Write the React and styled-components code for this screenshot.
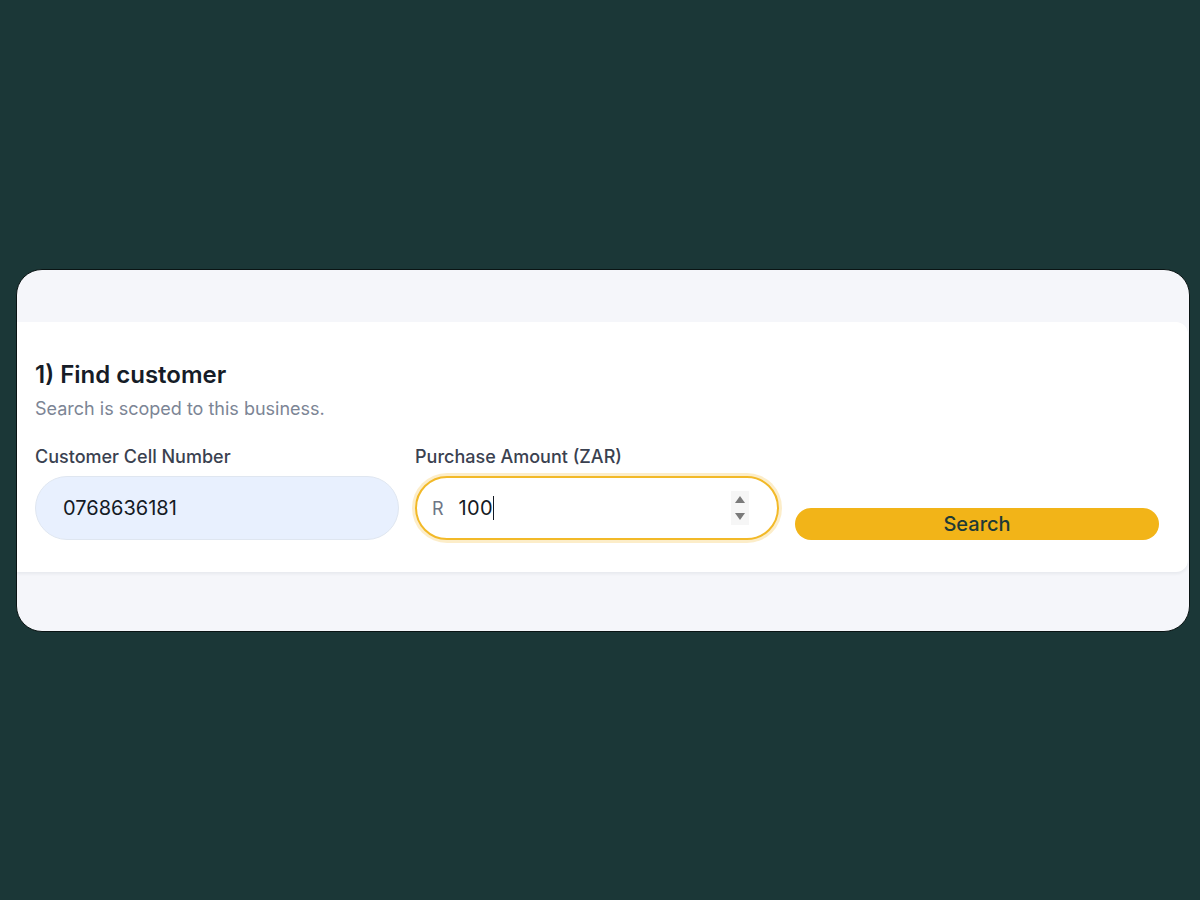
import React from 'react'
import styled, { createGlobalStyle } from 'styled-components'

const Global = createGlobalStyle`
  html, body {
    margin: 0;
    padding: 0;
    background: #1b3737;
  }
  body {
    font-family: Inter, "Noto Sans", "Liberation Sans", sans-serif;
  }
`

function App() {
  return (
    <Page>
      <Global />
      <Frame>
        <Card>
          <Title>1) Find customer</Title>
          <Sub>Search is scoped to this business.</Sub>
          <Grid>
            <Field>
              <Label>Customer Cell Number</Label>
              <CellInput>0768636181</CellInput>
            </Field>
            <Field>
              <Label>Purchase Amount (ZAR)</Label>
              <AmountInput>
                <Prefix>R</Prefix>
                <Value>100<Caret /></Value>
                <Spinner>
                  <svg width="12" height="26" viewBox="0 0 12 26">
                    <path d="M6 1 L11 8 L1 8 Z" fill="#7a7a7a" />
                    <path d="M1 18 L11 18 L6 25 Z" fill="#7a7a7a" />
                  </svg>
                </Spinner>
              </AmountInput>
            </Field>
            <Field>
              <SearchButton>Search</SearchButton>
            </Field>
          </Grid>
        </Card>
      </Frame>
    </Page>
  )
}

const Page = styled.div`
  width: 1200px;
  height: 900px;
  padding-top: 269px;
  padding-left: 16px;
  box-sizing: border-box;
`

const Frame = styled.div`
  width: 1174px;
  height: 363px;
  box-sizing: border-box;
  background: #f5f6fa;
  border: 1px solid #0a1414;
  border-radius: 26px;
  overflow: hidden;
  padding-top: 52px;
`

const Card = styled.div`
  width: 1171px;
  background: #ffffff;
  border-radius: 0 12px 12px 0;
  box-shadow: 0 2px 3px rgba(20, 30, 50, 0.06);
  padding: 37px 29px 32px 18px;
  box-sizing: border-box;
`

const Title = styled.h2`
  margin: 0;
  font-size: 24px;
  line-height: 32px;
  font-weight: 600;
  color: #161c27;
`

const Sub = styled.p`
  margin: 6px 0 0;
  font-size: 18px;
  line-height: 24px;
  color: #7c8595;
`

const Grid = styled.div`
  display: grid;
  grid-template-columns: repeat(3, 364px);
  column-gap: 16px;
  align-items: end;
  margin-top: 24px;
`

const Field = styled.div`
  display: flex;
  flex-direction: column;
`

const Label = styled.label`
  font-size: 18px;
  line-height: 24px;
  font-weight: 500;
  color: #3a4150;
  margin-bottom: 7px;
`

const CellInput = styled.div`
  height: 64px;
  box-sizing: border-box;
  border-radius: 32px;
  background: #e8f0fe;
  border: 1px solid #dfe6f0;
  padding: 0 27px;
  display: flex;
  align-items: center;
  font-size: 20px;
  color: #141a24;
`

const AmountInput = styled.div`
  height: 64px;
  box-sizing: border-box;
  border-radius: 32px;
  background: #ffffff;
  border: 2px solid #f2b928;
  box-shadow: 0 0 0 3px rgba(242, 185, 40, 0.25);
  padding: 0 28px 0 15px;
  display: flex;
  align-items: center;
  font-size: 20px;
  color: #141a24;
`

const Prefix = styled.span`
  font-size: 18px;
  color: #6e7686;
  margin-right: 15px;
`

const Value = styled.span`
  flex: 1;
  display: flex;
  align-items: center;
  letter-spacing: 0.3px;
`

const Caret = styled.span`
  display: inline-block;
  width: 1.5px;
  height: 24px;
  background: #141a24;
`

const Spinner = styled.span`
  display: flex;
  align-items: center;
  justify-content: center;
  width: 18px;
  height: 34px;
  background: #f6f6f6;
`

const SearchButton = styled.button`
  height: 32px;
  border: none;
  border-radius: 16px;
  background: #f2b418;
  color: #1f3a36;
  font-family: Inter, "Liberation Sans", sans-serif;
  font-size: 20px;
  font-weight: 500;
  padding: 0;
  cursor: pointer;
`

export default App
